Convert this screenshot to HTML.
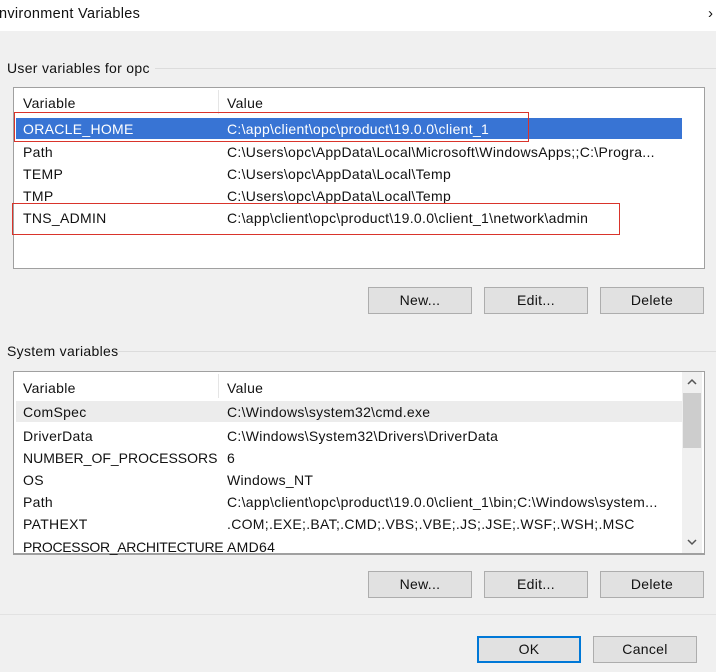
<!DOCTYPE html>
<html><head><style>
body{margin:0;width:716px;height:672px;background:#f0f0f0;font-family:"Liberation Sans",sans-serif;font-size:14px;letter-spacing:0.3px;color:#111;position:relative;overflow:hidden}
.a{position:absolute;white-space:nowrap}
.title{left:0;top:0;width:716px;height:31px;background:#fff}
.list{background:#fff;border:1px solid #a0a0a0}
.btn{background:#e1e1e1;border:1px solid #adadad;text-align:center;line-height:24px;font-size:14px;box-sizing:border-box}
.red{border:1.5px solid #d9342b;box-sizing:border-box}
.line{height:1px;background:#dcdcdc}
</style></head><body>
<div class="a title"></div>
<div class="a" style="left:-1px;top:6px;font-size:14.5px">nvironment Variables</div>
<div class="a" style="left:708px;top:5px;font-size:15px">›</div>

<div class="a line" style="left:155px;top:68px;width:561px"></div>
<div class="a" style="left:7px;top:60px">User variables for opc</div>
<div class="a list" style="left:13px;top:87px;width:690px;height:180px"></div>
<div class="a" style="left:218px;top:90px;width:1px;height:24px;background:#e5e5e5"></div>
<div class="a" style="left:23px;top:95px">Variable</div>
<div class="a" style="left:227px;top:95px">Value</div>
<div class="a" style="left:16px;top:118px;width:666px;height:21px;background:#3874d4"></div>
<div class="a" style="left:23px;top:121px;color:#fff">ORACLE_HOME</div>
<div class="a" style="left:227px;top:121px;color:#fff">C:\app\client\opc\product\19.0.0\client_1</div>
<div class="a" style="left:23px;top:144px">Path</div>
<div class="a" style="left:227px;top:144px">C:\Users\opc\AppData\Local\Microsoft\WindowsApps;;C:\Progra...</div>
<div class="a" style="left:23px;top:166px">TEMP</div>
<div class="a" style="left:227px;top:166px">C:\Users\opc\AppData\Local\Temp</div>
<div class="a" style="left:23px;top:188px">TMP</div>
<div class="a" style="left:227px;top:188px">C:\Users\opc\AppData\Local\Temp</div>
<div class="a" style="left:23px;top:210px">TNS_ADMIN</div>
<div class="a" style="left:227px;top:210px">C:\app\client\opc\product\19.0.0\client_1\network\admin</div>
<div class="a red" style="left:14px;top:112px;width:515px;height:30px"></div>
<div class="a red" style="left:12px;top:203px;width:608px;height:32px"></div>

<div class="a btn" style="left:368px;top:287px;width:104px;height:27px">New...</div>
<div class="a btn" style="left:484px;top:287px;width:104px;height:27px">Edit...</div>
<div class="a btn" style="left:600px;top:287px;width:104px;height:27px">Delete</div>

<div class="a line" style="left:118px;top:351px;width:598px"></div>
<div class="a" style="left:7px;top:343px">System variables</div>
<div class="a list" style="left:13px;top:371px;width:690px;height:182px"></div>
<div class="a" style="left:218px;top:374px;width:1px;height:24px;background:#e5e5e5"></div>
<div class="a" style="left:682px;top:372px;width:20px;height:181px;background:#f0f0f0"></div>
<div class="a" style="left:683px;top:393px;width:18px;height:55px;background:#cdcdcd"></div>
<svg class="a" style="left:686px;top:378px" width="12" height="8"><path d="M2 6 L6 2 L10 6" fill="none" stroke="#555" stroke-width="1.5"/></svg>
<svg class="a" style="left:686px;top:538px" width="12" height="8"><path d="M2 2 L6 6 L10 2" fill="none" stroke="#555" stroke-width="1.5"/></svg>
<div class="a" style="left:16px;top:401px;width:666px;height:21px;background:#ececec"></div>
<div class="a" style="left:23px;top:380px">Variable</div>
<div class="a" style="left:227px;top:380px">Value</div>
<div class="a" style="left:23px;top:404px">ComSpec</div><div class="a" style="left:227px;top:404px">C:\Windows\system32\cmd.exe</div>
<div class="a" style="left:23px;top:428px">DriverData</div><div class="a" style="left:227px;top:428px">C:\Windows\System32\Drivers\DriverData</div>
<div class="a" style="left:23px;top:450px;letter-spacing:0">NUMBER_OF_PROCESSORS</div><div class="a" style="left:227px;top:450px">6</div>
<div class="a" style="left:23px;top:472px">OS</div><div class="a" style="left:227px;top:472px">Windows_NT</div>
<div class="a" style="left:23px;top:494px">Path</div><div class="a" style="left:227px;top:494px">C:\app\client\opc\product\19.0.0\client_1\bin;C:\Windows\system...</div>
<div class="a" style="left:23px;top:516px">PATHEXT</div><div class="a" style="left:227px;top:516px">.COM;.EXE;.BAT;.CMD;.VBS;.VBE;.JS;.JSE;.WSF;.WSH;.MSC</div>
<div class="a" style="left:23px;top:539px;letter-spacing:-0.3px">PROCESSOR_ARCHITECTURE</div><div class="a" style="left:227px;top:539px">AMD64</div>
<div class="a" style="left:14px;top:553px;width:690px;height:1px;background:#a0a0a0"></div>

<div class="a btn" style="left:368px;top:571px;width:104px;height:27px">New...</div>
<div class="a btn" style="left:484px;top:571px;width:104px;height:27px">Edit...</div>
<div class="a btn" style="left:600px;top:571px;width:104px;height:27px">Delete</div>

<div class="a line" style="left:0;top:614px;width:716px;background:#e2e2e2"></div>
<div class="a btn" style="left:477px;top:636px;width:104px;height:27px;border:2px solid #0078d7;line-height:23px">OK</div>
<div class="a btn" style="left:593px;top:636px;width:104px;height:27px">Cancel</div>
</body></html>
